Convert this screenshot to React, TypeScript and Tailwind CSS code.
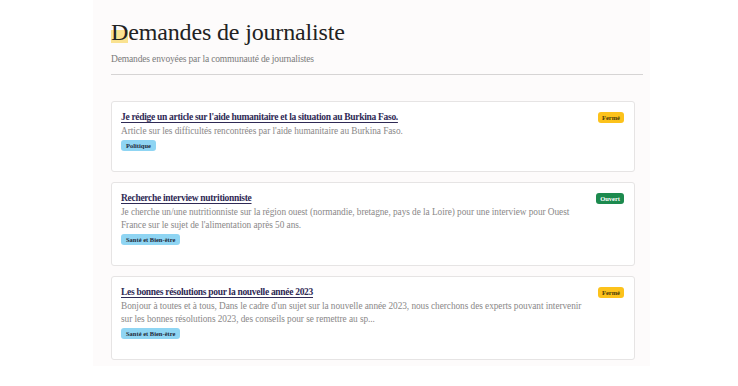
const requests = [
  {
    title: "Je rédige un article sur l'aide humanitaire et la situation au Burkina Faso.",
    text: "Article sur les difficultés rencontrées par l'aide humanitaire au Burkina Faso.",
    tag: "Politique",
    open: false,
  },
  {
    title: "Recherche interview nutritionniste",
    text: "Je cherche un/une nutritionniste sur la région ouest (normandie, bretagne, pays de la Loire) pour une interview pour Ouest France sur le sujet de l'alimentation après 50 ans.",
    tag: "Santé et Bien-être",
    open: true,
  },
  {
    title: "Les bonnes résolutions pour la nouvelle année 2023",
    text: "Bonjour à toutes et à tous, Dans le cadre d'un sujet sur la nouvelle année 2023, nous cherchons des experts pouvant intervenir sur les bonnes résolutions 2023, des conseils pour se remettre au sp...",
    tag: "Santé et Bien-être",
    open: false,
  },
];

export default function App() {
  return (
    <main className="min-h-screen bg-white font-['Liberation_Serif',serif]">
      <div className="ml-[93px] w-[557px] bg-[#fdfbfb] pt-[15px] pb-[6px] pl-[18px] pr-[7px]">
        <h1 className="text-[24px] leading-[34px] tracking-[-0.15px] text-[#222]">
          <span className="bg-[linear-gradient(transparent_42%,#fae290_42%,#fae290_92%,transparent_92%)]">D</span>
          emandes de journaliste
        </h1>
        <p className="mt-[3px] text-[9.5px] leading-[14px] tracking-[-0.15px] text-[#7a7a7a]">
          Demandes envoyées par la communauté de journalistes
        </p>
        <div className="mt-[8px] h-px bg-[#d6d4d4]" />

        <div className="mt-[26px] flex flex-col gap-[10px] w-[524px]">
          {requests.map((r) => (
            <div key={r.title} className="flex items-start gap-[6px] rounded-[3px] border border-[#e6e4e4] bg-white pl-[9px] pr-[10px] pt-[9px] pb-[20px]">
              <div className="flex flex-1 flex-col items-start">
                <h2 className="text-[9.5px] leading-[12px] font-bold tracking-[-0.3px] text-[#2f2a55] underline underline-offset-[1.5px]">
                  {r.title}
                </h2>
                <p className="mt-[2px] text-[9.3px] leading-[13px] tracking-[-0.05px] text-[#8a8888]">{r.text}</p>
                <span className="mt-[2px] rounded-[3px] bg-[#8fd5f3] px-[5px] py-[1px] text-[6.5px] leading-[9px] font-bold text-[#1f2a3a]">
                  {r.tag}
                </span>
              </div>
              {r.open ? (
                <span className="mt-[1px] rounded-[3px] bg-[#1c8a4e] px-[4px] py-[1px] text-[6.5px] leading-[9px] font-bold text-white">
                  Ouvert
                </span>
              ) : (
                <span className="mt-[1px] rounded-[3px] bg-[#fcc21b] px-[4px] py-[1px] text-[6.5px] leading-[9px] font-bold text-[#4a3a08]">
                  Fermé
                </span>
              )}
            </div>
          ))}
        </div>
      </div>
    </main>
  );
}
